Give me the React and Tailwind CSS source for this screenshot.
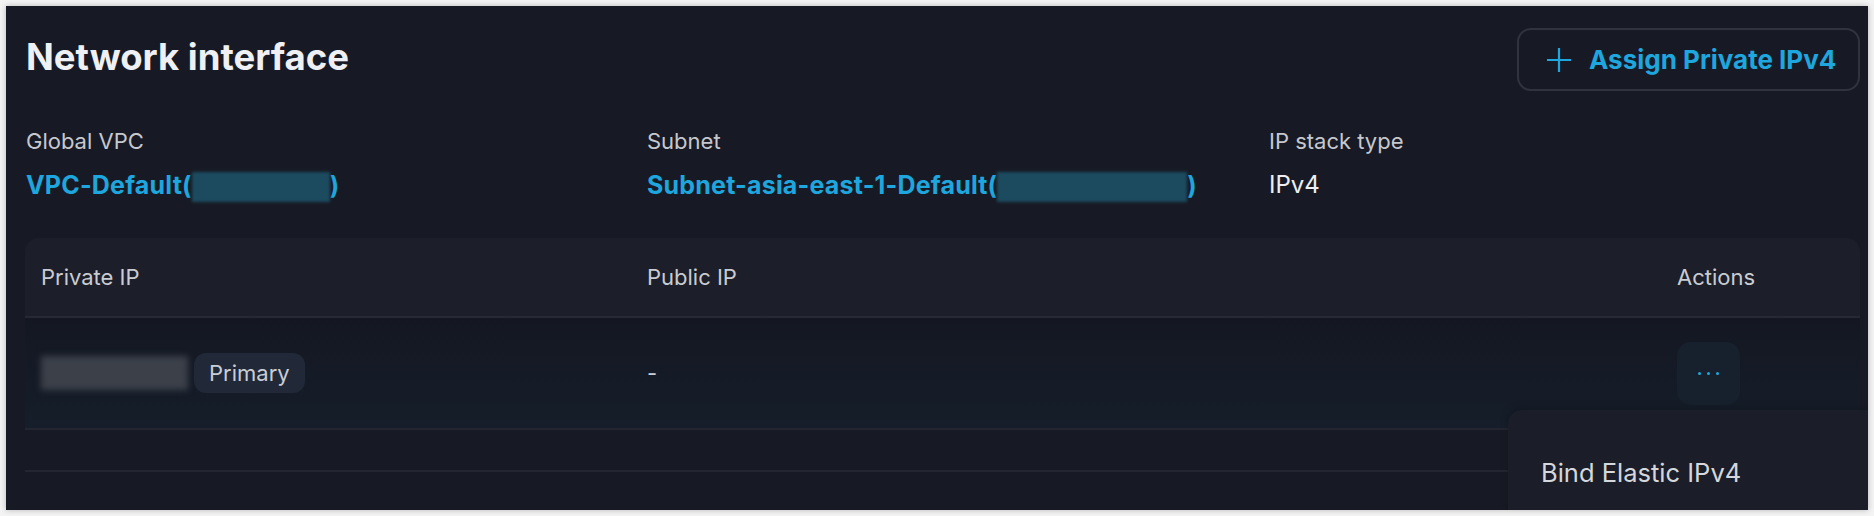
import React from 'react';

const PlusIcon = () => (
    <svg width="24" height="24" viewBox="0 0 24 24" fill="none" stroke="currentColor" strokeWidth="2.2">
        <path d="M12 0v24M0 12h24" />
    </svg>
);

const Blur = ({ className }) => (
    <span className={`inline-block align-middle blur-[1.5px] ${className}`} />
);

const App = () => {
    return (
        <div className="min-h-screen bg-[#f4f4f5] p-[6px] font-['Inter',sans-serif]">
            <div className="relative h-[504px] overflow-hidden bg-[#171a24] pl-[19px] pr-[8px] shadow-[0_0_6px_rgba(0,0,0,0.25)]">
                {/* header */}
                <div className="mt-[22px] flex h-[63px] items-center justify-between">
                    <h1 className="-mt-[5px] pl-[1px] text-[36.5px] leading-none font-bold text-[#eef0f3]">Network interface</h1>
                    <button className="flex h-[63px] w-[343px] items-center gap-[18px] rounded-[14px] border-2 border-[#30333e] pl-[28px] text-[26px] font-bold text-[#1ea6de]">
                        <PlusIcon />
                        Assign Private IPv4
                    </button>
                </div>

                {/* info */}
                <div className="mt-[36px] grid grid-cols-[621px_622px_1fr] pl-[1px]">
                    <div>
                        <div className="text-[22px] leading-[28px] text-[#c6c8ce]">Global VPC</div>
                        <div className="mt-[15px] text-[25px] leading-[30px] font-bold tracking-[0.2px] text-[#1ea6de]">
                            VPC-Default(<Blur className="h-[30px] w-[138px] bg-[#1c4b60]" />)
                        </div>
                    </div>
                    <div>
                        <div className="text-[22px] leading-[28px] text-[#c6c8ce]">Subnet</div>
                        <div className="mt-[15px] text-[25px] leading-[30px] font-bold tracking-[0.2px] text-[#1ea6de]">
                            Subnet-asia-east-1-Default(<Blur className="h-[30px] w-[190px] bg-[#1c4b60]" />)
                        </div>
                    </div>
                    <div>
                        <div className="text-[22px] leading-[28px] text-[#c6c8ce]">IP stack type</div>
                        <div className="mt-[15px] text-[24px] leading-[30px] text-[#eceef1]">IPv4</div>
                    </div>
                </div>

                {/* table */}
                <div className="mt-[36px]">
                    <div className="grid h-[80px] grid-cols-[606px_1030px_1fr] items-center rounded-t-[14px] border-b-2 border-[#262934] bg-[#1c1f29] text-[22px] text-[#c9ccd2]">
                        <div className="px-4">Private IP</div>
                        <div className="px-4">Public IP</div>
                        <div className="px-4">Actions</div>
                    </div>
                    <div className="grid h-[112px] grid-cols-[606px_1030px_1fr] items-center border-b-2 border-[#232631] bg-gradient-to-b from-[#141722] to-[#151e2a] text-[22px]">
                        <div className="flex items-center gap-[6px] px-4">
                            <Blur className="h-[34px] w-[147px] bg-[#3b4049] blur-[3px]" />
                            <span className="flex h-[40px] items-center rounded-[12px] bg-[#212939] px-[15px] text-[#c8cdd6]">Primary</span>
                        </div>
                        <div className="px-4 text-[#c9ccd2]">-</div>
                        <div className="px-4">
                            <button className="flex h-[63px] w-[63px] items-center justify-center gap-[6px] rounded-[14px] bg-[#17212d]">
                                <span className="h-[3px] w-[3px] rounded-full bg-[#1ea6de]" />
                                <span className="h-[3px] w-[3px] rounded-full bg-[#1ea6de]" />
                                <span className="h-[3px] w-[3px] rounded-full bg-[#1ea6de]" />
                            </button>
                        </div>
                    </div>
                    <div className="h-[42px] border-b-2 border-[#232631]" />
                </div>

                {/* dropdown menu */}
                <div className="absolute top-[404px] right-0 left-[1502px] h-[140px] rounded-tl-[14px] bg-[#1b1e28] pt-[48px] pl-[33px] shadow-[0_-2px_8px_rgba(0,0,0,0.2)]">
                    <span className="text-[25.5px] leading-[30px] text-[#d4d7dc]">Bind Elastic IPv4</span>
                </div>
            </div>
        </div>
    );
};

export default App;
